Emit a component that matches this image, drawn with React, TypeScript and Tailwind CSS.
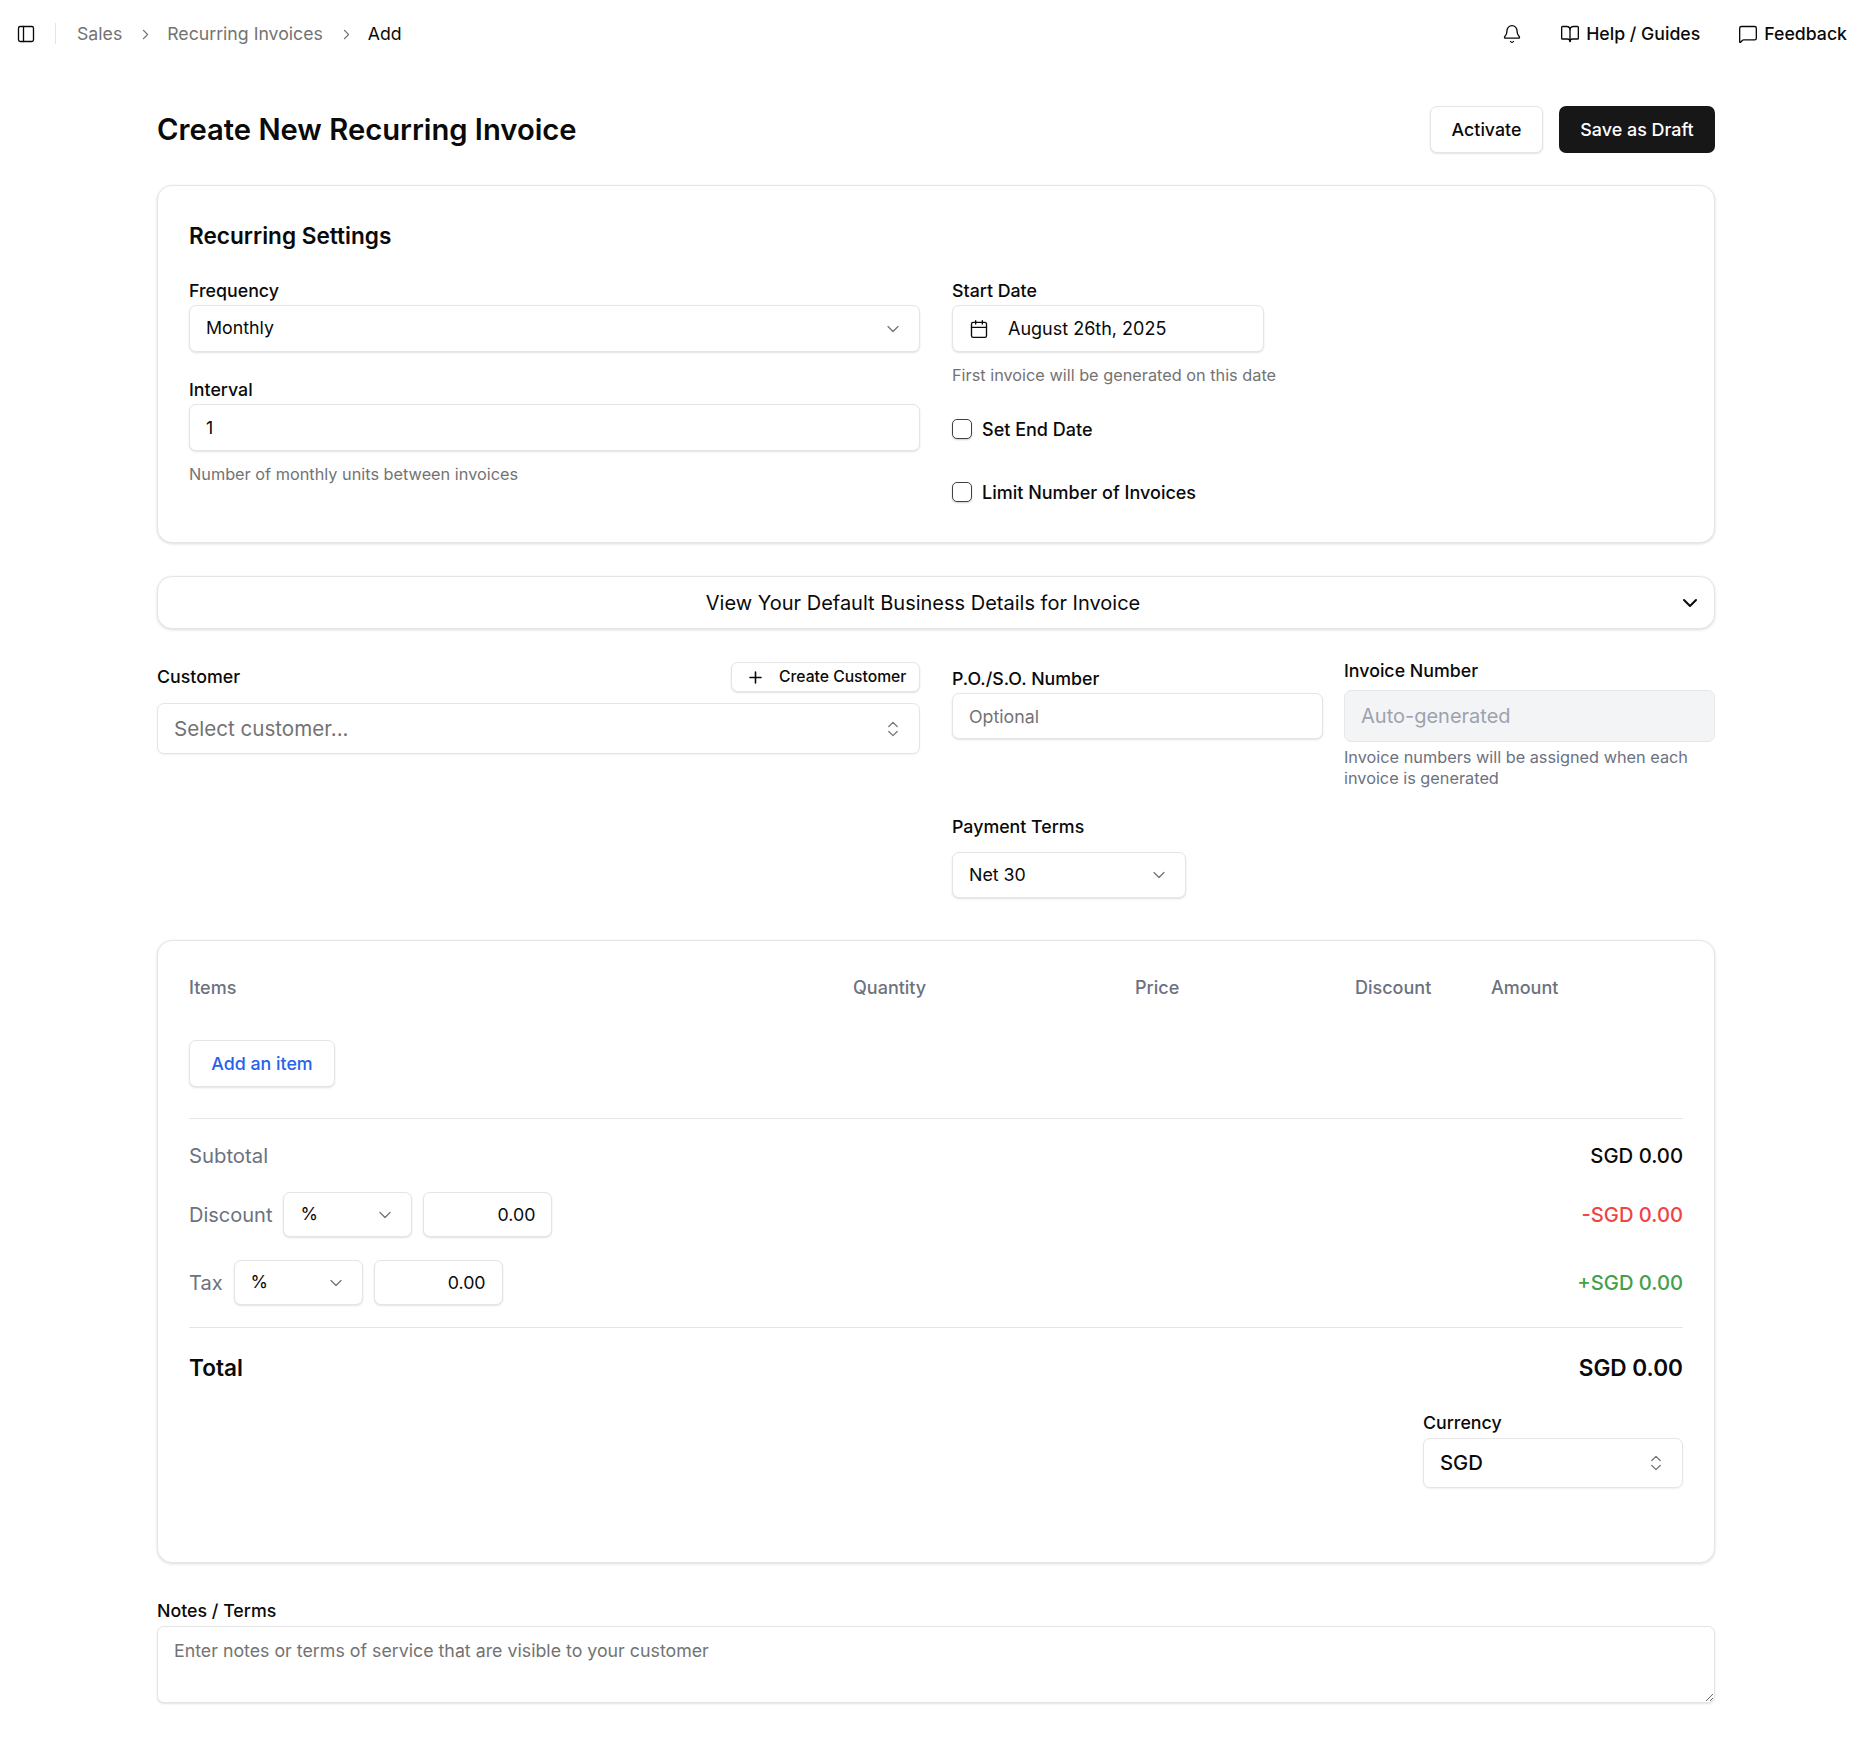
import React from "react";
import { PanelLeft, ChevronRight, Bell, BookOpen, MessageSquare, ChevronDown, Calendar, Plus, ChevronsUpDown } from "lucide-react";

const field = "rounded-[7px] border border-[#e5e5e5] bg-white shadow-[0_1px_2px_rgba(0,0,0,0.12)]";
const label = "h-5 text-[17.8px] leading-5 font-medium text-[#0a0a0a]";
const help = "text-[16.3px] leading-[21px] text-[#737373]";
const inputText = "text-[17.8px] text-[#0a0a0a] outline-none";

function Sel({ text, className }: { text: string; className: string }) {
  return (
    <div className={`flex items-center justify-between ${field} px-4 ${className}`}>
      <span className="text-[17.8px] text-[#0a0a0a]">{text}</span>
      <ChevronDown size={20} strokeWidth={1.5} className="text-[#737373]" />
    </div>
  );
}

function Check({ text, className }: { text: string; className: string }) {
  return (
    <div className={`flex items-center gap-[10px] ${className}`}>
      <div className="h-5 w-5 rounded-[5px] border border-[#3f3f46] bg-white shadow-[0_1px_2px_rgba(0,0,0,0.2)]" />
      <span className="text-[18px] font-medium text-[#0a0a0a]">{text}</span>
    </div>
  );
}

function Adj({ name, amount, amountClass }: { name: string; amount: string; amountClass: string }) {
  return (
    <div className="flex h-[45px] items-center justify-between">
      <div className="flex items-center gap-[11px]">
        <span className="pt-px text-[20px] text-[#6b7280]">{name}</span>
        <Sel text="%" className="h-[45px] w-[129px]" />
        <input readOnly value="0.00" className={`${field} ${inputText} h-[45px] w-[129px] px-4 text-right`} />
      </div>
      <span className={`pt-px text-[20.2px] font-medium ${amountClass}`}>{amount}</span>
    </div>
  );
}

export default function App() {
  return (
    <div className="min-h-[1754px] bg-white pb-[51px] font-['Inter',sans-serif] text-[#0a0a0a]">
      <header className="flex h-[68px] items-center justify-between pl-[16px] pr-[29px]">
        <div className="flex items-center">
          <PanelLeft size={20} strokeWidth={1.6} />
          <div className="ml-[19px] mr-[21px] h-[21px] w-px bg-[#e5e5e5]" />
          <nav className="flex items-center pt-px text-[17.7px] text-[#737373]">
            <span>Sales</span>
            <ChevronRight size={17} strokeWidth={1.5} className="ml-[15px] mr-[13px]" />
            <span>Recurring Invoices</span>
            <ChevronRight size={17} strokeWidth={1.5} className="ml-[15px] mr-[13px]" />
            <span className="text-[#0a0a0a]">Add</span>
          </nav>
        </div>
        <div className="flex items-center text-[17.7px] font-medium">
          <Bell size={20} strokeWidth={1.6} />
          <BookOpen size={20} strokeWidth={1.6} className="ml-[38px]" />
          <span className="ml-[6px] pt-px">Help / Guides</span>
          <MessageSquare size={20} strokeWidth={1.6} className="ml-[38px]" />
          <span className="ml-[6px] pt-px">Feedback</span>
        </div>
      </header>

      <main className="pl-[157px] pr-[161px]">
        <div className="mt-[38px] flex h-[47px] items-center justify-between">
          <h1 className="pt-px text-[29.2px] font-semibold">Create New Recurring Invoice</h1>
          <div className="flex gap-[16px]">
            <button className={`${field} h-[47px] w-[113px] pt-px text-[17.8px] font-medium`}>Activate</button>
            <button className="h-[47px] w-[156px] rounded-[7px] bg-[#171717] pt-px text-[17.9px] font-medium text-white">Save as Draft</button>
          </div>
        </div>

        <section className="mt-[32px] h-[358px] rounded-[15px] border border-[#e5e5e5] bg-white px-[31px] pt-[35px] shadow-[0_1px_3px_rgba(0,0,0,0.14)]">
          <h2 className="h-[30px] text-[22.6px] leading-[30px] font-semibold">Recurring Settings</h2>
          <div className="mt-[30px] grid grid-cols-2 gap-[32px]">
            <div>
              <div className={label}>Frequency</div>
              <Sel text="Monthly" className="mt-[4px] h-[47px]" />
              <div className={`${label} mt-[28px]`}>Interval</div>
              <input readOnly value="1" className={`${field} ${inputText} mt-[4px] h-[47px] w-full px-4`} />
              <div className={`${help} mt-[13px]`}>Number of monthly units between invoices</div>
            </div>
            <div>
              <div className={label}>Start Date</div>
              <div className={`${field} mt-[4px] flex h-[47px] w-[312px] items-center pl-4 text-[18px]`}>
                <Calendar size={20} strokeWidth={1.6} />
                <span className="ml-[19px]">August 26th, 2025</span>
              </div>
              <div className={`${help} mt-[13px]`}>First invoice will be generated on this date</div>
              <Check text="Set End Date" className="mt-[33px] h-5" />
              <Check text="Limit Number of Invoices" className="mt-[43px] h-5" />
            </div>
          </div>
        </section>

        <div className="relative mt-[33px] flex h-[53px] items-center justify-center rounded-[15px] border border-[#e5e5e5] bg-white pr-[26px] shadow-[0_1px_3px_rgba(0,0,0,0.14)]">
          <span className="pt-px text-[20px]">View Your Default Business Details for Invoice</span>
          <ChevronDown size={24} strokeWidth={2} className="absolute right-[12px]" />
        </div>

        <div className="mt-[33px] grid grid-cols-2 gap-[32px]">
          <div>
            <div className="flex h-[30px] items-center justify-between">
              <span className="pt-px text-[17.8px] font-medium">Customer</span>
              <div className={`${field} flex h-[30px] w-[189px] items-center pl-[14px] text-[15.7px] font-medium`}>
                <Plus size={19} strokeWidth={2} />
                <span className="ml-[14px]">Create Customer</span>
              </div>
            </div>
            <div className="mt-[11px] flex h-[51px] items-center justify-between rounded-[7px] border border-[#e5e5e5] bg-white px-4 shadow-[0_1px_2px_rgba(0,0,0,0.06)]">
              <span className="pt-px text-[20.6px] text-[#737373]">Select customer...</span>
              <ChevronsUpDown size={20} strokeWidth={1.5} className="text-[#737373]" />
            </div>
          </div>
          <div>
            <div className="flex items-start gap-[21px]">
              <div className="w-[371px] pt-[7px]">
                <div className={label}>P.O./S.O. Number</div>
                <input readOnly placeholder="Optional" className={`${field} ${inputText} mt-[4px] h-[46px] w-full px-4 placeholder:text-[#737373]`} />
              </div>
              <div className="flex-1">
                <div className={`${label} -mt-px`}>Invoice Number</div>
                <input readOnly placeholder="Auto-generated" className="mt-[9px] h-[52px] w-full rounded-[7px] border border-[#e5e7eb] bg-[#f3f4f6] px-4 text-[20px] outline-none placeholder:text-[#9ca3af]" />
                <div className="mt-[5px] text-[16.3px] leading-[21px] text-[#6b7280]">Invoice numbers will be assigned when each invoice is generated</div>
              </div>
            </div>
            <div className={`${label} mt-[28px]`}>Payment Terms</div>
            <Sel text="Net 30" className="mt-[15px] h-[46px] w-[234px]" />
          </div>
        </div>

        <section className="mt-[42px] h-[623px] rounded-[15px] border border-[#e5e5e5] bg-white px-[31px] pt-[33px] shadow-[0_1px_3px_rgba(0,0,0,0.14)]">
          <div className="grid h-5 grid-cols-[664px_282px_220px_136px_1fr] items-center text-[18px] font-medium text-[#6b7280]">
            <span>Items</span>
            <span>Quantity</span>
            <span>Price</span>
            <span>Discount</span>
            <span>Amount</span>
          </div>
          <button className={`${field} mt-[46px] block h-[47px] w-[146px] pt-px text-[17.8px] font-medium text-[#2563eb]`}>Add an item</button>
          <div className="mt-[31px] h-px bg-[#e5e5e5]" />
          <div className="mt-[25px] flex h-6 items-center justify-between text-[20.3px]">
            <span className="text-[#6b7280]">Subtotal</span>
            <span className="font-medium">SGD 0.00</span>
          </div>
          <div className="mt-[24px]">
            <Adj name="Discount" amount="-SGD 0.00" amountClass="text-[#ef4444]" />
          </div>
          <div className="mt-[23px]">
            <Adj name="Tax" amount="+SGD 0.00" amountClass="text-[#43a047]" />
          </div>
          <div className="mt-[22px] h-px bg-[#e5e5e5]" />
          <div className="mt-[24px] flex h-[30px] items-center justify-between pt-px text-[22.6px] font-semibold">
            <span>Total</span>
            <span>SGD 0.00</span>
          </div>
          <div className="ml-auto mt-[31px] w-[260px]">
            <div className={label}>Currency</div>
            <div className="mt-[5px] flex h-[50px] items-center justify-between rounded-[7px] border border-[#e5e5e5] bg-white px-4 shadow-[0_1px_2px_rgba(0,0,0,0.06)]">
              <span className="pt-px text-[20.3px] font-medium">SGD</span>
              <ChevronsUpDown size={20} strokeWidth={1.5} className="text-[#737373]" />
            </div>
          </div>
        </section>

        <div className={`${label} mt-[38px]`}>Notes / Terms</div>
        <textarea
          readOnly
          placeholder="Enter notes or terms of service that are visible to your customer"
          className={`${field} mt-[5px] block h-[77px] w-full px-4 py-[11px] text-[17.8px] outline-none placeholder:text-[#737373]`}
        />
      </main>
    </div>
  );
}
